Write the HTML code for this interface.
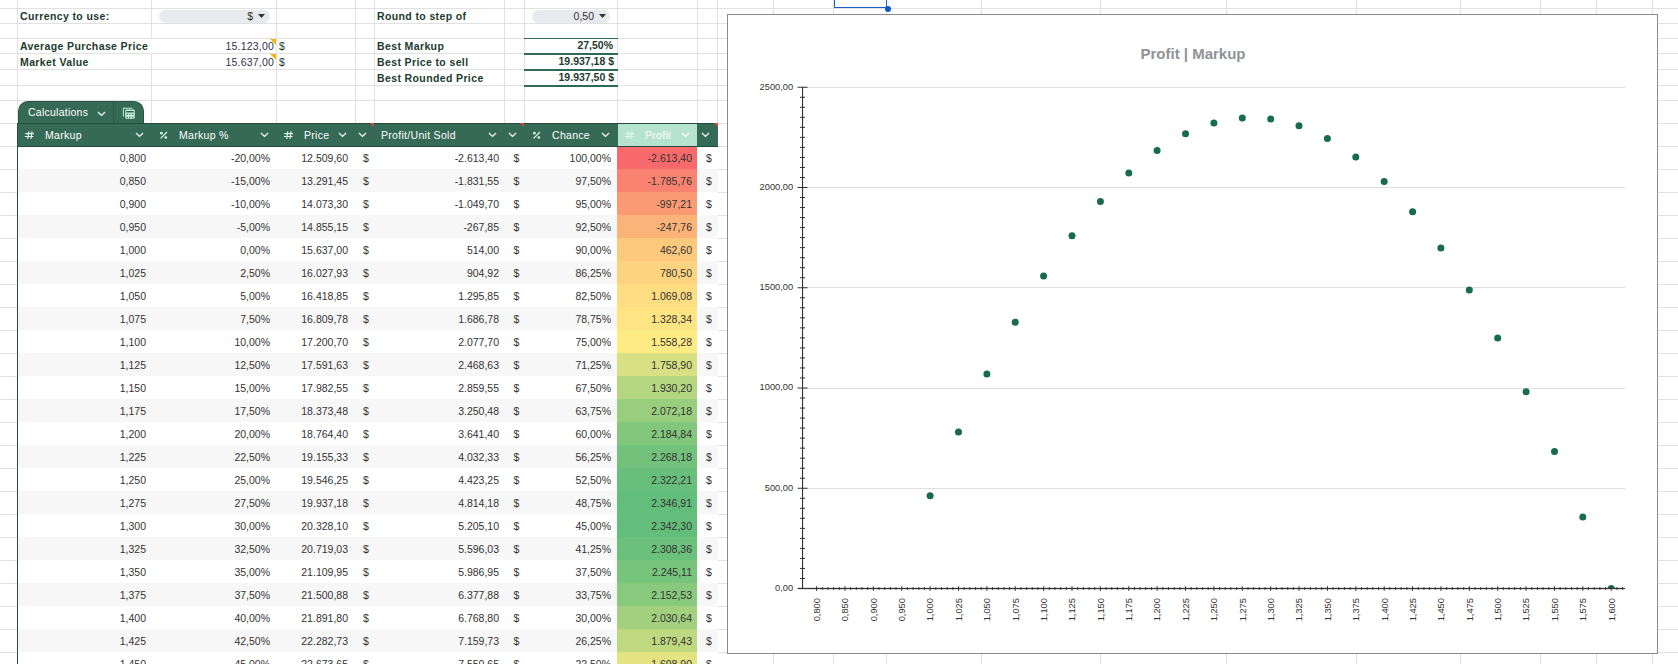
<!DOCTYPE html><html><head><meta charset="utf-8"><style>
html,body{margin:0;padding:0;}
body{width:1678px;height:664px;overflow:hidden;background:#fff;position:relative;font-family:"Liberation Sans", sans-serif;}
.a{position:absolute;white-space:nowrap;line-height:1;}
.lbl{font-weight:bold;font-size:10.5px;letter-spacing:0.38px;color:#1d3a2e;}
.val{font-weight:bold;font-size:10.5px;color:#1d3a2e;}
.num{font-size:10.5px;color:#333;}
.r{text-align:right;}
.hd{font-size:10.5px;letter-spacing:0.3px;color:#fff;}
svg{position:absolute;left:0;top:0;}

</style></head><body>
<svg width="1678" height="664" shape-rendering="crispEdges"><rect x="0" y="8" width="1678" height="1" fill="#e1e1e1"/><rect x="0" y="23" width="1678" height="1" fill="#e1e1e1"/><rect x="0" y="38" width="1678" height="1" fill="#e1e1e1"/><rect x="0" y="53" width="1678" height="1" fill="#e1e1e1"/><rect x="0" y="69" width="1678" height="1" fill="#e1e1e1"/><rect x="0" y="85" width="1678" height="1" fill="#e1e1e1"/><rect x="0" y="100" width="1678" height="1" fill="#e1e1e1"/><rect x="0" y="123" width="1678" height="1" fill="#e1e1e1"/><rect x="0" y="146" width="1678" height="1" fill="#e1e1e1"/><rect x="0" y="169" width="1678" height="1" fill="#e1e1e1"/><rect x="0" y="192" width="1678" height="1" fill="#e1e1e1"/><rect x="0" y="215" width="1678" height="1" fill="#e1e1e1"/><rect x="0" y="238" width="1678" height="1" fill="#e1e1e1"/><rect x="0" y="261" width="1678" height="1" fill="#e1e1e1"/><rect x="0" y="284" width="1678" height="1" fill="#e1e1e1"/><rect x="0" y="307" width="1678" height="1" fill="#e1e1e1"/><rect x="0" y="330" width="1678" height="1" fill="#e1e1e1"/><rect x="0" y="353" width="1678" height="1" fill="#e1e1e1"/><rect x="0" y="376" width="1678" height="1" fill="#e1e1e1"/><rect x="0" y="399" width="1678" height="1" fill="#e1e1e1"/><rect x="0" y="422" width="1678" height="1" fill="#e1e1e1"/><rect x="0" y="445" width="1678" height="1" fill="#e1e1e1"/><rect x="0" y="468" width="1678" height="1" fill="#e1e1e1"/><rect x="0" y="491" width="1678" height="1" fill="#e1e1e1"/><rect x="0" y="514" width="1678" height="1" fill="#e1e1e1"/><rect x="0" y="537" width="1678" height="1" fill="#e1e1e1"/><rect x="0" y="560" width="1678" height="1" fill="#e1e1e1"/><rect x="0" y="583" width="1678" height="1" fill="#e1e1e1"/><rect x="0" y="606" width="1678" height="1" fill="#e1e1e1"/><rect x="0" y="629" width="1678" height="1" fill="#e1e1e1"/><rect x="0" y="652" width="1678" height="1" fill="#e1e1e1"/><rect x="0" y="675" width="1678" height="1" fill="#e1e1e1"/><rect x="17" y="0" width="1" height="664" fill="#e1e1e1"/><rect x="151" y="0" width="1" height="664" fill="#e1e1e1"/><rect x="276" y="0" width="1" height="664" fill="#e1e1e1"/><rect x="355" y="0" width="1" height="664" fill="#e1e1e1"/><rect x="374" y="0" width="1" height="664" fill="#e1e1e1"/><rect x="504" y="0" width="1" height="664" fill="#e1e1e1"/><rect x="524" y="0" width="1" height="664" fill="#e1e1e1"/><rect x="617" y="0" width="1" height="664" fill="#e1e1e1"/><rect x="697" y="0" width="1" height="664" fill="#e1e1e1"/><rect x="717" y="0" width="1" height="664" fill="#e1e1e1"/><rect x="773" y="0" width="1" height="664" fill="#e1e1e1"/><rect x="833" y="0" width="1" height="664" fill="#e1e1e1"/><rect x="886" y="0" width="1" height="664" fill="#e1e1e1"/><rect x="981" y="0" width="1" height="664" fill="#e1e1e1"/><rect x="1100" y="0" width="1" height="664" fill="#e1e1e1"/><rect x="1226" y="0" width="1" height="664" fill="#e1e1e1"/><rect x="1356" y="0" width="1" height="664" fill="#e1e1e1"/><rect x="1460" y="0" width="1" height="664" fill="#e1e1e1"/><rect x="1540" y="0" width="1" height="664" fill="#e1e1e1"/><rect x="1596" y="0" width="1" height="664" fill="#e1e1e1"/><rect x="1652" y="0" width="1" height="664" fill="#e1e1e1"/></svg>
<div class="a lbl" style="left:20px;top:11px;">Currency to use:</div>
<div class="a lbl" style="left:20px;top:41px;">Average Purchase Price</div>
<div class="a lbl" style="left:20px;top:57px;">Market Value</div>
<div class="a lbl" style="left:377px;top:11px;">Round to step of</div>
<div class="a lbl" style="left:377px;top:41px;">Best Markup</div>
<div class="a lbl" style="left:377px;top:57px;">Best Price to sell</div>
<div class="a lbl" style="left:377px;top:73px;">Best Rounded Price</div>
<div class="a" style="left:159px;top:10px;width:111px;height:13px;border-radius:7px;background:#e8eaed;"></div>
<div class="a num" style="right:1425px;top:11px;color:#1f2f28;">$</div>
<svg width="8" height="5" style="left:258px;top:14px;"><path d="M0 0H7L3.5 4Z" fill="#333"/></svg>
<div class="a" style="left:532px;top:10px;width:78px;height:13px;border-radius:7px;background:#e8eaed;"></div>
<div class="a num" style="right:1084px;top:11px;">0,50</div>
<svg width="8" height="5" style="left:599px;top:14px;"><path d="M0 0H7L3.5 4Z" fill="#333"/></svg>
<div class="a" style="left:151px;top:39px;width:125px;height:14px;background:#fff"></div>
<div class="a num" style="right:1404px;top:41px;color:#33334a;letter-spacing:0.2px;">15.123,00</div>
<div class="a num" style="right:1404px;top:57px;color:#33334a;letter-spacing:0.2px;">15.637,00</div>
<div class="a num" style="left:279px;top:41px;color:#1f3a30;">$</div>
<div class="a num" style="left:279px;top:57px;color:#1f3a30;">$</div>
<svg width="7" height="6" style="left:270px;top:39px;"><path d="M0 0H6V6Z" fill="#f6b40e"/></svg>
<svg width="7" height="6" style="left:270px;top:54px;"><path d="M0 0H6V6Z" fill="#f6b40e"/></svg>
<div class="a" style="left:524px;top:38px;width:94px;height:1px;background:#2e6b57"></div>
<div class="a" style="left:524px;top:53px;width:94px;height:2px;background:#2e6b57"></div>
<div class="a" style="left:524px;top:69px;width:94px;height:2px;background:#2e6b57"></div>
<div class="a" style="left:524px;top:85px;width:94px;height:2px;background:#2e6b57"></div>
<div class="a val" style="right:1065px;top:40px;">27,50%</div>
<div class="a val" style="right:1064px;top:56px;">19.937,18 $</div>
<div class="a val" style="right:1064px;top:72px;">19.937,50 $</div>
<div class="a" style="left:18px;top:101px;width:124px;height:22px;background:#356a56;border:1px solid #2a5544;border-bottom:none;border-radius:10px 10px 0 0;"></div>
<div class="a" style="left:113px;top:101px;width:1px;height:22px;background:#2a5a48;"></div>
<div class="a hd" style="left:28px;top:107px;letter-spacing:0.25px;">Calculations</div>
<svg width="9" height="6" style="left:97px;top:111px;"><path d="M1 1L4.5 4.5L8 1" fill="none" stroke="#fff" stroke-width="1.2"/></svg>
<svg width="16" height="16" style="left:120px;top:104px;"><path d="M3.4 12.6V4.2H12.3" fill="none" stroke="#b9e6d3" stroke-width="1.1"/><rect x="5.2" y="5.6" width="9.6" height="9.2" rx="1.4" fill="#c4ecdb"/><rect x="6.3" y="7.0" width="7.4" height="1.5" fill="#2f5f4d"/><g fill="#2f5f4d"><rect x="6.6" y="9.8" width="1.3" height="1"/><rect x="9.2" y="9.8" width="1.3" height="1"/><rect x="12.1" y="9.8" width="1.3" height="1"/><rect x="6.6" y="12.8" width="1.3" height="1"/><rect x="9.2" y="12.8" width="1.3" height="1"/><rect x="12.1" y="12.8" width="1.3" height="1"/></g></svg>
<div class="a" style="left:18px;top:146px;width:700px;height:23px;background:#ffffff;"></div>
<div class="a" style="left:617px;top:146px;width:80px;height:23px;background:#f8696b;"></div>
<div class="a num" style="right:1532px;top:153px;">0,800</div>
<div class="a num" style="right:1408px;top:153px;">-20,00%</div>
<div class="a num" style="right:1330px;top:153px;">12.509,60</div>
<div class="a num" style="left:363px;top:153px;">$</div>
<div class="a num" style="right:1179px;top:153px;">-2.613,40</div>
<div class="a num" style="left:513.5px;top:153px;">$</div>
<div class="a num" style="right:1067px;top:153px;">100,00%</div>
<div class="a num" style="right:986px;top:153px;">-2.613,40</div>
<div class="a num" style="left:706px;top:153px;">$</div>
<div class="a" style="left:18px;top:169px;width:700px;height:23px;background:#f7f7f7;"></div>
<div class="a" style="left:617px;top:169px;width:80px;height:23px;background:#f98370;"></div>
<div class="a num" style="right:1532px;top:176px;">0,850</div>
<div class="a num" style="right:1408px;top:176px;">-15,00%</div>
<div class="a num" style="right:1330px;top:176px;">13.291,45</div>
<div class="a num" style="left:363px;top:176px;">$</div>
<div class="a num" style="right:1179px;top:176px;">-1.831,55</div>
<div class="a num" style="left:513.5px;top:176px;">$</div>
<div class="a num" style="right:1067px;top:176px;">97,50%</div>
<div class="a num" style="right:986px;top:176px;">-1.785,76</div>
<div class="a num" style="left:706px;top:176px;">$</div>
<div class="a" style="left:18px;top:192px;width:700px;height:23px;background:#ffffff;"></div>
<div class="a" style="left:617px;top:192px;width:80px;height:23px;background:#fb9b75;"></div>
<div class="a num" style="right:1532px;top:199px;">0,900</div>
<div class="a num" style="right:1408px;top:199px;">-10,00%</div>
<div class="a num" style="right:1330px;top:199px;">14.073,30</div>
<div class="a num" style="left:363px;top:199px;">$</div>
<div class="a num" style="right:1179px;top:199px;">-1.049,70</div>
<div class="a num" style="left:513.5px;top:199px;">$</div>
<div class="a num" style="right:1067px;top:199px;">95,00%</div>
<div class="a num" style="right:986px;top:199px;">-997,21</div>
<div class="a num" style="left:706px;top:199px;">$</div>
<div class="a" style="left:18px;top:215px;width:700px;height:23px;background:#f7f7f7;"></div>
<div class="a" style="left:617px;top:215px;width:80px;height:23px;background:#fcb379;"></div>
<div class="a num" style="right:1532px;top:222px;">0,950</div>
<div class="a num" style="right:1408px;top:222px;">-5,00%</div>
<div class="a num" style="right:1330px;top:222px;">14.855,15</div>
<div class="a num" style="left:363px;top:222px;">$</div>
<div class="a num" style="right:1179px;top:222px;">-267,85</div>
<div class="a num" style="left:513.5px;top:222px;">$</div>
<div class="a num" style="right:1067px;top:222px;">92,50%</div>
<div class="a num" style="right:986px;top:222px;">-247,76</div>
<div class="a num" style="left:706px;top:222px;">$</div>
<div class="a" style="left:18px;top:238px;width:700px;height:23px;background:#ffffff;"></div>
<div class="a" style="left:617px;top:238px;width:80px;height:23px;background:#fdc97d;"></div>
<div class="a num" style="right:1532px;top:245px;">1,000</div>
<div class="a num" style="right:1408px;top:245px;">0,00%</div>
<div class="a num" style="right:1330px;top:245px;">15.637,00</div>
<div class="a num" style="left:363px;top:245px;">$</div>
<div class="a num" style="right:1179px;top:245px;">514,00</div>
<div class="a num" style="left:513.5px;top:245px;">$</div>
<div class="a num" style="right:1067px;top:245px;">90,00%</div>
<div class="a num" style="right:986px;top:245px;">462,60</div>
<div class="a num" style="left:706px;top:245px;">$</div>
<div class="a" style="left:18px;top:261px;width:700px;height:23px;background:#f7f7f7;"></div>
<div class="a" style="left:617px;top:261px;width:80px;height:23px;background:#fed37f;"></div>
<div class="a num" style="right:1532px;top:268px;">1,025</div>
<div class="a num" style="right:1408px;top:268px;">2,50%</div>
<div class="a num" style="right:1330px;top:268px;">16.027,93</div>
<div class="a num" style="left:363px;top:268px;">$</div>
<div class="a num" style="right:1179px;top:268px;">904,92</div>
<div class="a num" style="left:513.5px;top:268px;">$</div>
<div class="a num" style="right:1067px;top:268px;">86,25%</div>
<div class="a num" style="right:986px;top:268px;">780,50</div>
<div class="a num" style="left:706px;top:268px;">$</div>
<div class="a" style="left:18px;top:284px;width:700px;height:23px;background:#ffffff;"></div>
<div class="a" style="left:617px;top:284px;width:80px;height:23px;background:#fedc81;"></div>
<div class="a num" style="right:1532px;top:291px;">1,050</div>
<div class="a num" style="right:1408px;top:291px;">5,00%</div>
<div class="a num" style="right:1330px;top:291px;">16.418,85</div>
<div class="a num" style="left:363px;top:291px;">$</div>
<div class="a num" style="right:1179px;top:291px;">1.295,85</div>
<div class="a num" style="left:513.5px;top:291px;">$</div>
<div class="a num" style="right:1067px;top:291px;">82,50%</div>
<div class="a num" style="right:986px;top:291px;">1.069,08</div>
<div class="a num" style="left:706px;top:291px;">$</div>
<div class="a" style="left:18px;top:307px;width:700px;height:23px;background:#f7f7f7;"></div>
<div class="a" style="left:617px;top:307px;width:80px;height:23px;background:#ffe483;"></div>
<div class="a num" style="right:1532px;top:314px;">1,075</div>
<div class="a num" style="right:1408px;top:314px;">7,50%</div>
<div class="a num" style="right:1330px;top:314px;">16.809,78</div>
<div class="a num" style="left:363px;top:314px;">$</div>
<div class="a num" style="right:1179px;top:314px;">1.686,78</div>
<div class="a num" style="left:513.5px;top:314px;">$</div>
<div class="a num" style="right:1067px;top:314px;">78,75%</div>
<div class="a num" style="right:986px;top:314px;">1.328,34</div>
<div class="a num" style="left:706px;top:314px;">$</div>
<div class="a" style="left:18px;top:330px;width:700px;height:23px;background:#ffffff;"></div>
<div class="a" style="left:617px;top:330px;width:80px;height:23px;background:#ffeb84;"></div>
<div class="a num" style="right:1532px;top:337px;">1,100</div>
<div class="a num" style="right:1408px;top:337px;">10,00%</div>
<div class="a num" style="right:1330px;top:337px;">17.200,70</div>
<div class="a num" style="left:363px;top:337px;">$</div>
<div class="a num" style="right:1179px;top:337px;">2.077,70</div>
<div class="a num" style="left:513.5px;top:337px;">$</div>
<div class="a num" style="right:1067px;top:337px;">75,00%</div>
<div class="a num" style="right:986px;top:337px;">1.558,28</div>
<div class="a num" style="left:706px;top:337px;">$</div>
<div class="a" style="left:18px;top:353px;width:700px;height:23px;background:#f7f7f7;"></div>
<div class="a" style="left:617px;top:353px;width:80px;height:23px;background:#d7e082;"></div>
<div class="a num" style="right:1532px;top:360px;">1,125</div>
<div class="a num" style="right:1408px;top:360px;">12,50%</div>
<div class="a num" style="right:1330px;top:360px;">17.591,63</div>
<div class="a num" style="left:363px;top:360px;">$</div>
<div class="a num" style="right:1179px;top:360px;">2.468,63</div>
<div class="a num" style="left:513.5px;top:360px;">$</div>
<div class="a num" style="right:1067px;top:360px;">71,25%</div>
<div class="a num" style="right:986px;top:360px;">1.758,90</div>
<div class="a num" style="left:706px;top:360px;">$</div>
<div class="a" style="left:18px;top:376px;width:700px;height:23px;background:#ffffff;"></div>
<div class="a" style="left:617px;top:376px;width:80px;height:23px;background:#b5d680;"></div>
<div class="a num" style="right:1532px;top:383px;">1,150</div>
<div class="a num" style="right:1408px;top:383px;">15,00%</div>
<div class="a num" style="right:1330px;top:383px;">17.982,55</div>
<div class="a num" style="left:363px;top:383px;">$</div>
<div class="a num" style="right:1179px;top:383px;">2.859,55</div>
<div class="a num" style="left:513.5px;top:383px;">$</div>
<div class="a num" style="right:1067px;top:383px;">67,50%</div>
<div class="a num" style="right:986px;top:383px;">1.930,20</div>
<div class="a num" style="left:706px;top:383px;">$</div>
<div class="a" style="left:18px;top:399px;width:700px;height:23px;background:#f7f7f7;"></div>
<div class="a" style="left:617px;top:399px;width:80px;height:23px;background:#99ce7e;"></div>
<div class="a num" style="right:1532px;top:406px;">1,175</div>
<div class="a num" style="right:1408px;top:406px;">17,50%</div>
<div class="a num" style="right:1330px;top:406px;">18.373,48</div>
<div class="a num" style="left:363px;top:406px;">$</div>
<div class="a num" style="right:1179px;top:406px;">3.250,48</div>
<div class="a num" style="left:513.5px;top:406px;">$</div>
<div class="a num" style="right:1067px;top:406px;">63,75%</div>
<div class="a num" style="right:986px;top:406px;">2.072,18</div>
<div class="a num" style="left:706px;top:406px;">$</div>
<div class="a" style="left:18px;top:422px;width:700px;height:23px;background:#ffffff;"></div>
<div class="a" style="left:617px;top:422px;width:80px;height:23px;background:#83c77d;"></div>
<div class="a num" style="right:1532px;top:429px;">1,200</div>
<div class="a num" style="right:1408px;top:429px;">20,00%</div>
<div class="a num" style="right:1330px;top:429px;">18.764,40</div>
<div class="a num" style="left:363px;top:429px;">$</div>
<div class="a num" style="right:1179px;top:429px;">3.641,40</div>
<div class="a num" style="left:513.5px;top:429px;">$</div>
<div class="a num" style="right:1067px;top:429px;">60,00%</div>
<div class="a num" style="right:986px;top:429px;">2.184,84</div>
<div class="a num" style="left:706px;top:429px;">$</div>
<div class="a" style="left:18px;top:445px;width:700px;height:23px;background:#f7f7f7;"></div>
<div class="a" style="left:617px;top:445px;width:80px;height:23px;background:#73c27c;"></div>
<div class="a num" style="right:1532px;top:452px;">1,225</div>
<div class="a num" style="right:1408px;top:452px;">22,50%</div>
<div class="a num" style="right:1330px;top:452px;">19.155,33</div>
<div class="a num" style="left:363px;top:452px;">$</div>
<div class="a num" style="right:1179px;top:452px;">4.032,33</div>
<div class="a num" style="left:513.5px;top:452px;">$</div>
<div class="a num" style="right:1067px;top:452px;">56,25%</div>
<div class="a num" style="right:986px;top:452px;">2.268,18</div>
<div class="a num" style="left:706px;top:452px;">$</div>
<div class="a" style="left:18px;top:468px;width:700px;height:23px;background:#ffffff;"></div>
<div class="a" style="left:617px;top:468px;width:80px;height:23px;background:#68bf7b;"></div>
<div class="a num" style="right:1532px;top:475px;">1,250</div>
<div class="a num" style="right:1408px;top:475px;">25,00%</div>
<div class="a num" style="right:1330px;top:475px;">19.546,25</div>
<div class="a num" style="left:363px;top:475px;">$</div>
<div class="a num" style="right:1179px;top:475px;">4.423,25</div>
<div class="a num" style="left:513.5px;top:475px;">$</div>
<div class="a num" style="right:1067px;top:475px;">52,50%</div>
<div class="a num" style="right:986px;top:475px;">2.322,21</div>
<div class="a num" style="left:706px;top:475px;">$</div>
<div class="a" style="left:18px;top:491px;width:700px;height:23px;background:#f7f7f7;"></div>
<div class="a" style="left:617px;top:491px;width:80px;height:23px;background:#63be7b;"></div>
<div class="a num" style="right:1532px;top:498px;">1,275</div>
<div class="a num" style="right:1408px;top:498px;">27,50%</div>
<div class="a num" style="right:1330px;top:498px;">19.937,18</div>
<div class="a num" style="left:363px;top:498px;">$</div>
<div class="a num" style="right:1179px;top:498px;">4.814,18</div>
<div class="a num" style="left:513.5px;top:498px;">$</div>
<div class="a num" style="right:1067px;top:498px;">48,75%</div>
<div class="a num" style="right:986px;top:498px;">2.346,91</div>
<div class="a num" style="left:706px;top:498px;">$</div>
<div class="a" style="left:18px;top:514px;width:700px;height:23px;background:#ffffff;"></div>
<div class="a" style="left:617px;top:514px;width:80px;height:23px;background:#64be7b;"></div>
<div class="a num" style="right:1532px;top:521px;">1,300</div>
<div class="a num" style="right:1408px;top:521px;">30,00%</div>
<div class="a num" style="right:1330px;top:521px;">20.328,10</div>
<div class="a num" style="left:363px;top:521px;">$</div>
<div class="a num" style="right:1179px;top:521px;">5.205,10</div>
<div class="a num" style="left:513.5px;top:521px;">$</div>
<div class="a num" style="right:1067px;top:521px;">45,00%</div>
<div class="a num" style="right:986px;top:521px;">2.342,30</div>
<div class="a num" style="left:706px;top:521px;">$</div>
<div class="a" style="left:18px;top:537px;width:700px;height:23px;background:#f7f7f7;"></div>
<div class="a" style="left:617px;top:537px;width:80px;height:23px;background:#6bc07b;"></div>
<div class="a num" style="right:1532px;top:544px;">1,325</div>
<div class="a num" style="right:1408px;top:544px;">32,50%</div>
<div class="a num" style="right:1330px;top:544px;">20.719,03</div>
<div class="a num" style="left:363px;top:544px;">$</div>
<div class="a num" style="right:1179px;top:544px;">5.596,03</div>
<div class="a num" style="left:513.5px;top:544px;">$</div>
<div class="a num" style="right:1067px;top:544px;">41,25%</div>
<div class="a num" style="right:986px;top:544px;">2.308,36</div>
<div class="a num" style="left:706px;top:544px;">$</div>
<div class="a" style="left:18px;top:560px;width:700px;height:23px;background:#ffffff;"></div>
<div class="a" style="left:617px;top:560px;width:80px;height:23px;background:#77c47c;"></div>
<div class="a num" style="right:1532px;top:567px;">1,350</div>
<div class="a num" style="right:1408px;top:567px;">35,00%</div>
<div class="a num" style="right:1330px;top:567px;">21.109,95</div>
<div class="a num" style="left:363px;top:567px;">$</div>
<div class="a num" style="right:1179px;top:567px;">5.986,95</div>
<div class="a num" style="left:513.5px;top:567px;">$</div>
<div class="a num" style="right:1067px;top:567px;">37,50%</div>
<div class="a num" style="right:986px;top:567px;">2.245,11</div>
<div class="a num" style="left:706px;top:567px;">$</div>
<div class="a" style="left:18px;top:583px;width:700px;height:23px;background:#f7f7f7;"></div>
<div class="a" style="left:617px;top:583px;width:80px;height:23px;background:#89c97d;"></div>
<div class="a num" style="right:1532px;top:590px;">1,375</div>
<div class="a num" style="right:1408px;top:590px;">37,50%</div>
<div class="a num" style="right:1330px;top:590px;">21.500,88</div>
<div class="a num" style="left:363px;top:590px;">$</div>
<div class="a num" style="right:1179px;top:590px;">6.377,88</div>
<div class="a num" style="left:513.5px;top:590px;">$</div>
<div class="a num" style="right:1067px;top:590px;">33,75%</div>
<div class="a num" style="right:986px;top:590px;">2.152,53</div>
<div class="a num" style="left:706px;top:590px;">$</div>
<div class="a" style="left:18px;top:606px;width:700px;height:23px;background:#ffffff;"></div>
<div class="a" style="left:617px;top:606px;width:80px;height:23px;background:#a2d07f;"></div>
<div class="a num" style="right:1532px;top:613px;">1,400</div>
<div class="a num" style="right:1408px;top:613px;">40,00%</div>
<div class="a num" style="right:1330px;top:613px;">21.891,80</div>
<div class="a num" style="left:363px;top:613px;">$</div>
<div class="a num" style="right:1179px;top:613px;">6.768,80</div>
<div class="a num" style="left:513.5px;top:613px;">$</div>
<div class="a num" style="right:1067px;top:613px;">30,00%</div>
<div class="a num" style="right:986px;top:613px;">2.030,64</div>
<div class="a num" style="left:706px;top:613px;">$</div>
<div class="a" style="left:18px;top:629px;width:700px;height:23px;background:#f7f7f7;"></div>
<div class="a" style="left:617px;top:629px;width:80px;height:23px;background:#bfd980;"></div>
<div class="a num" style="right:1532px;top:636px;">1,425</div>
<div class="a num" style="right:1408px;top:636px;">42,50%</div>
<div class="a num" style="right:1330px;top:636px;">22.282,73</div>
<div class="a num" style="left:363px;top:636px;">$</div>
<div class="a num" style="right:1179px;top:636px;">7.159,73</div>
<div class="a num" style="left:513.5px;top:636px;">$</div>
<div class="a num" style="right:1067px;top:636px;">26,25%</div>
<div class="a num" style="right:986px;top:636px;">1.879,43</div>
<div class="a num" style="left:706px;top:636px;">$</div>
<div class="a" style="left:18px;top:652px;width:700px;height:23px;background:#ffffff;"></div>
<div class="a" style="left:617px;top:652px;width:80px;height:23px;background:#e3e382;"></div>
<div class="a num" style="right:1532px;top:659px;">1,450</div>
<div class="a num" style="right:1408px;top:659px;">45,00%</div>
<div class="a num" style="right:1330px;top:659px;">22.673,65</div>
<div class="a num" style="left:363px;top:659px;">$</div>
<div class="a num" style="right:1179px;top:659px;">7.550,65</div>
<div class="a num" style="left:513.5px;top:659px;">$</div>
<div class="a num" style="right:1067px;top:659px;">22,50%</div>
<div class="a num" style="right:986px;top:659px;">1.698,90</div>
<div class="a num" style="left:706px;top:659px;">$</div>
<div class="a" style="left:17px;top:123px;width:701px;height:24px;background:#356a56;"></div>
<div class="a" style="left:17px;top:123px;width:701px;height:1px;background:#234d3d;"></div>
<div class="a" style="left:17px;top:146px;width:701px;height:1px;background:#234d3d;"></div>
<div class="a" style="left:618px;top:124px;width:79px;height:22px;background:#b5e3d0;"></div>
<svg width="12" height="12" style="left:24px;top:129px;"><g stroke="#dff5ec" stroke-width="1.15" fill="none"><path d="M1.3 4.6H10M0.8 7.5H9.5M4.8 2.2L3.8 10M8 2.2L7 10"/></g></svg>
<div class="a hd" style="left:45px;top:130px;">Markup</div>
<svg width="9" height="6" style="left:135px;top:132px;"><path d="M1 1L4.5 4.5L8 1" fill="none" stroke="#fff" stroke-width="1.2"/></svg>
<svg width="12" height="12" style="left:158px;top:129px;"><g fill="#d6f2e6"><circle cx="3.4" cy="4.2" r="1.35"/><circle cx="7.8" cy="8.5" r="1.35"/></g><path d="M2.6 9.4L9.0 3.0" stroke="#eafaf3" stroke-width="1.1"/></svg>
<div class="a hd" style="left:179px;top:130px;">Markup %</div>
<svg width="9" height="6" style="left:260px;top:132px;"><path d="M1 1L4.5 4.5L8 1" fill="none" stroke="#fff" stroke-width="1.2"/></svg>
<svg width="12" height="12" style="left:283px;top:129px;"><g stroke="#dff5ec" stroke-width="1.15" fill="none"><path d="M1.3 4.6H10M0.8 7.5H9.5M4.8 2.2L3.8 10M8 2.2L7 10"/></g></svg>
<div class="a hd" style="left:304px;top:130px;">Price</div>
<svg width="9" height="6" style="left:338px;top:132px;"><path d="M1 1L4.5 4.5L8 1" fill="none" stroke="#fff" stroke-width="1.2"/></svg>
<svg width="9" height="6" style="left:358px;top:132px;"><path d="M1 1L4.5 4.5L8 1" fill="none" stroke="#fff" stroke-width="1.2"/></svg>
<div class="a hd" style="left:381px;top:130px;">Profit/Unit Sold</div>
<svg width="9" height="6" style="left:488px;top:132px;"><path d="M1 1L4.5 4.5L8 1" fill="none" stroke="#fff" stroke-width="1.2"/></svg>
<svg width="9" height="6" style="left:508px;top:132px;"><path d="M1 1L4.5 4.5L8 1" fill="none" stroke="#fff" stroke-width="1.2"/></svg>
<svg width="12" height="12" style="left:531px;top:129px;"><g fill="#d6f2e6"><circle cx="3.4" cy="4.2" r="1.35"/><circle cx="7.8" cy="8.5" r="1.35"/></g><path d="M2.6 9.4L9.0 3.0" stroke="#eafaf3" stroke-width="1.1"/></svg>
<div class="a hd" style="left:552px;top:130px;">Chance</div>
<svg width="9" height="6" style="left:601px;top:132px;"><path d="M1 1L4.5 4.5L8 1" fill="none" stroke="#fff" stroke-width="1.2"/></svg>
<svg width="12" height="12" style="left:624px;top:129px;"><g stroke="#dff5ec" stroke-width="1.15" fill="none"><path d="M1.3 4.6H10M0.8 7.5H9.5M4.8 2.2L3.8 10M8 2.2L7 10"/></g></svg>
<div class="a hd" style="left:645px;top:130px;">Profit</div>
<svg width="9" height="6" style="left:681px;top:132px;"><path d="M1 1L4.5 4.5L8 1" fill="none" stroke="#fff" stroke-width="1.2"/></svg>
<svg width="9" height="6" style="left:701px;top:132px;"><path d="M1 1L4.5 4.5L8 1" fill="none" stroke="#fff" stroke-width="1.2"/></svg>
<svg width="4" height="4" style="left:370px;top:123px;"><path d="M0 0H4V4Z" fill="#e0453a"/></svg>
<svg width="4" height="4" style="left:520px;top:123px;"><path d="M0 0H4V4Z" fill="#e0453a"/></svg>
<svg width="4" height="4" style="left:714px;top:123px;"><path d="M0 0H4V4Z" fill="#e0453a"/></svg>
<div class="a" style="left:17px;top:123px;width:1px;height:541px;background:#234d3d;"></div>
<svg width="1678" height="664" style="left:0;top:0"><defs><clipPath id="pc"><rect x="790" y="60" width="850" height="528.5"/></clipPath></defs><rect x="727.5" y="14.5" width="930" height="639" fill="#fff" stroke="#8a8a8a" stroke-width="1"/><text x="1193" y="58.6" text-anchor="middle" font-family='"Liberation Sans", sans-serif' font-weight="bold" font-size="15" fill="#8e9396">Profit | Markup</text><rect x="803" y="488" width="822" height="1" fill="#dedede" shape-rendering="crispEdges"/><rect x="803" y="388" width="822" height="1" fill="#dedede" shape-rendering="crispEdges"/><rect x="803" y="287" width="822" height="1" fill="#dedede" shape-rendering="crispEdges"/><rect x="803" y="187" width="822" height="1" fill="#dedede" shape-rendering="crispEdges"/><rect x="803" y="87" width="822" height="1" fill="#dedede" shape-rendering="crispEdges"/><text x="793.2" y="590.9" text-anchor="end" font-family='"Liberation Sans", sans-serif' font-size="9.3" fill="#333">0,00</text><text x="793.2" y="490.6" text-anchor="end" font-family='"Liberation Sans", sans-serif' font-size="9.3" fill="#333">500,00</text><text x="793.2" y="390.4" text-anchor="end" font-family='"Liberation Sans", sans-serif' font-size="9.3" fill="#333">1000,00</text><text x="793.2" y="290.1" text-anchor="end" font-family='"Liberation Sans", sans-serif' font-size="9.3" fill="#333">1500,00</text><text x="793.2" y="189.9" text-anchor="end" font-family='"Liberation Sans", sans-serif' font-size="9.3" fill="#333">2000,00</text><text x="793.2" y="89.6" text-anchor="end" font-family='"Liberation Sans", sans-serif' font-size="9.3" fill="#333">2500,00</text><circle cx="930.1" cy="495.7" r="3.5" fill="#176b4f" clip-path="url(#pc)"/><circle cx="958.5" cy="432.0" r="3.5" fill="#176b4f" clip-path="url(#pc)"/><circle cx="986.9" cy="374.1" r="3.5" fill="#176b4f" clip-path="url(#pc)"/><circle cx="1015.2" cy="322.2" r="3.5" fill="#176b4f" clip-path="url(#pc)"/><circle cx="1043.6" cy="276.1" r="3.5" fill="#176b4f" clip-path="url(#pc)"/><circle cx="1072.0" cy="235.8" r="3.5" fill="#176b4f" clip-path="url(#pc)"/><circle cx="1100.4" cy="201.5" r="3.5" fill="#176b4f" clip-path="url(#pc)"/><circle cx="1128.8" cy="173.0" r="3.5" fill="#176b4f" clip-path="url(#pc)"/><circle cx="1157.1" cy="150.4" r="3.5" fill="#176b4f" clip-path="url(#pc)"/><circle cx="1185.5" cy="133.7" r="3.5" fill="#176b4f" clip-path="url(#pc)"/><circle cx="1213.9" cy="122.9" r="3.5" fill="#176b4f" clip-path="url(#pc)"/><circle cx="1242.3" cy="117.9" r="3.5" fill="#176b4f" clip-path="url(#pc)"/><circle cx="1270.7" cy="118.9" r="3.5" fill="#176b4f" clip-path="url(#pc)"/><circle cx="1299.0" cy="125.7" r="3.5" fill="#176b4f" clip-path="url(#pc)"/><circle cx="1327.4" cy="138.4" r="3.5" fill="#176b4f" clip-path="url(#pc)"/><circle cx="1355.8" cy="156.9" r="3.5" fill="#176b4f" clip-path="url(#pc)"/><circle cx="1384.2" cy="181.4" r="3.5" fill="#176b4f" clip-path="url(#pc)"/><circle cx="1412.6" cy="211.7" r="3.5" fill="#176b4f" clip-path="url(#pc)"/><circle cx="1440.9" cy="247.9" r="3.5" fill="#176b4f" clip-path="url(#pc)"/><circle cx="1469.3" cy="289.9" r="3.5" fill="#176b4f" clip-path="url(#pc)"/><circle cx="1497.7" cy="337.9" r="3.5" fill="#176b4f" clip-path="url(#pc)"/><circle cx="1526.1" cy="391.7" r="3.5" fill="#176b4f" clip-path="url(#pc)"/><circle cx="1554.5" cy="451.4" r="3.5" fill="#176b4f" clip-path="url(#pc)"/><circle cx="1582.8" cy="517.0" r="3.5" fill="#176b4f" clip-path="url(#pc)"/><circle cx="1611.2" cy="588.5" r="3.5" fill="#176b4f" clip-path="url(#pc)"/><rect x="802" y="87" width="1.1" height="501.5" fill="#333"/><rect x="797.55" y="588.00" width="10" height="1" fill="#333"/><rect x="800.05" y="577.98" width="5" height="1" fill="#333"/><rect x="800.05" y="567.95" width="5" height="1" fill="#333"/><rect x="800.05" y="557.92" width="5" height="1" fill="#333"/><rect x="800.05" y="547.90" width="5" height="1" fill="#333"/><rect x="800.05" y="537.88" width="5" height="1" fill="#333"/><rect x="800.05" y="527.85" width="5" height="1" fill="#333"/><rect x="800.05" y="517.83" width="5" height="1" fill="#333"/><rect x="800.05" y="507.80" width="5" height="1" fill="#333"/><rect x="800.05" y="497.77" width="5" height="1" fill="#333"/><rect x="797.55" y="487.75" width="10" height="1" fill="#333"/><rect x="800.05" y="477.73" width="5" height="1" fill="#333"/><rect x="800.05" y="467.70" width="5" height="1" fill="#333"/><rect x="800.05" y="457.67" width="5" height="1" fill="#333"/><rect x="800.05" y="447.65" width="5" height="1" fill="#333"/><rect x="800.05" y="437.62" width="5" height="1" fill="#333"/><rect x="800.05" y="427.60" width="5" height="1" fill="#333"/><rect x="800.05" y="417.57" width="5" height="1" fill="#333"/><rect x="800.05" y="407.55" width="5" height="1" fill="#333"/><rect x="800.05" y="397.52" width="5" height="1" fill="#333"/><rect x="797.55" y="387.50" width="10" height="1" fill="#333"/><rect x="800.05" y="377.47" width="5" height="1" fill="#333"/><rect x="800.05" y="367.45" width="5" height="1" fill="#333"/><rect x="800.05" y="357.42" width="5" height="1" fill="#333"/><rect x="800.05" y="347.40" width="5" height="1" fill="#333"/><rect x="800.05" y="337.38" width="5" height="1" fill="#333"/><rect x="800.05" y="327.35" width="5" height="1" fill="#333"/><rect x="800.05" y="317.32" width="5" height="1" fill="#333"/><rect x="800.05" y="307.30" width="5" height="1" fill="#333"/><rect x="800.05" y="297.27" width="5" height="1" fill="#333"/><rect x="797.55" y="287.25" width="10" height="1" fill="#333"/><rect x="800.05" y="277.23" width="5" height="1" fill="#333"/><rect x="800.05" y="267.20" width="5" height="1" fill="#333"/><rect x="800.05" y="257.17" width="5" height="1" fill="#333"/><rect x="800.05" y="247.15" width="5" height="1" fill="#333"/><rect x="800.05" y="237.12" width="5" height="1" fill="#333"/><rect x="800.05" y="227.10" width="5" height="1" fill="#333"/><rect x="800.05" y="217.07" width="5" height="1" fill="#333"/><rect x="800.05" y="207.05" width="5" height="1" fill="#333"/><rect x="800.05" y="197.02" width="5" height="1" fill="#333"/><rect x="797.55" y="187.00" width="10" height="1" fill="#333"/><rect x="800.05" y="176.98" width="5" height="1" fill="#333"/><rect x="800.05" y="166.95" width="5" height="1" fill="#333"/><rect x="800.05" y="156.92" width="5" height="1" fill="#333"/><rect x="800.05" y="146.90" width="5" height="1" fill="#333"/><rect x="800.05" y="136.87" width="5" height="1" fill="#333"/><rect x="800.05" y="126.85" width="5" height="1" fill="#333"/><rect x="800.05" y="116.82" width="5" height="1" fill="#333"/><rect x="800.05" y="106.80" width="5" height="1" fill="#333"/><rect x="800.05" y="96.77" width="5" height="1" fill="#333"/><rect x="797.55" y="86.75" width="10" height="1" fill="#333"/><rect x="798" y="587.85" width="827" height="1.3" fill="#333"/><rect x="816.09" y="586.20" width="1" height="4.6" fill="#333"/><rect x="821.77" y="587.10" width="1" height="2.8" fill="#333"/><rect x="827.44" y="587.10" width="1" height="2.8" fill="#333"/><rect x="833.12" y="587.10" width="1" height="2.8" fill="#333"/><rect x="838.79" y="587.10" width="1" height="2.8" fill="#333"/><text transform="translate(819.9,621.3) rotate(-90)" font-family='"Liberation Sans", sans-serif' font-size="9.3" fill="#333">0,800</text><rect x="844.47" y="586.20" width="1" height="4.6" fill="#333"/><rect x="850.14" y="587.10" width="1" height="2.8" fill="#333"/><rect x="855.82" y="587.10" width="1" height="2.8" fill="#333"/><rect x="861.50" y="587.10" width="1" height="2.8" fill="#333"/><rect x="867.17" y="587.10" width="1" height="2.8" fill="#333"/><text transform="translate(848.3,621.3) rotate(-90)" font-family='"Liberation Sans", sans-serif' font-size="9.3" fill="#333">0,850</text><rect x="872.85" y="586.20" width="1" height="4.6" fill="#333"/><rect x="878.52" y="587.10" width="1" height="2.8" fill="#333"/><rect x="884.20" y="587.10" width="1" height="2.8" fill="#333"/><rect x="889.88" y="587.10" width="1" height="2.8" fill="#333"/><rect x="895.55" y="587.10" width="1" height="2.8" fill="#333"/><text transform="translate(876.6,621.3) rotate(-90)" font-family='"Liberation Sans", sans-serif' font-size="9.3" fill="#333">0,900</text><rect x="901.23" y="586.20" width="1" height="4.6" fill="#333"/><rect x="906.90" y="587.10" width="1" height="2.8" fill="#333"/><rect x="912.58" y="587.10" width="1" height="2.8" fill="#333"/><rect x="918.26" y="587.10" width="1" height="2.8" fill="#333"/><rect x="923.93" y="587.10" width="1" height="2.8" fill="#333"/><text transform="translate(905.0,621.3) rotate(-90)" font-family='"Liberation Sans", sans-serif' font-size="9.3" fill="#333">0,950</text><rect x="929.61" y="586.20" width="1" height="4.6" fill="#333"/><rect x="935.28" y="587.10" width="1" height="2.8" fill="#333"/><rect x="940.96" y="587.10" width="1" height="2.8" fill="#333"/><rect x="946.63" y="587.10" width="1" height="2.8" fill="#333"/><rect x="952.31" y="587.10" width="1" height="2.8" fill="#333"/><text transform="translate(933.4,621.3) rotate(-90)" font-family='"Liberation Sans", sans-serif' font-size="9.3" fill="#333">1,000</text><rect x="957.99" y="586.20" width="1" height="4.6" fill="#333"/><rect x="963.66" y="587.10" width="1" height="2.8" fill="#333"/><rect x="969.34" y="587.10" width="1" height="2.8" fill="#333"/><rect x="975.01" y="587.10" width="1" height="2.8" fill="#333"/><rect x="980.69" y="587.10" width="1" height="2.8" fill="#333"/><text transform="translate(961.8,621.3) rotate(-90)" font-family='"Liberation Sans", sans-serif' font-size="9.3" fill="#333">1,025</text><rect x="986.37" y="586.20" width="1" height="4.6" fill="#333"/><rect x="992.04" y="587.10" width="1" height="2.8" fill="#333"/><rect x="997.72" y="587.10" width="1" height="2.8" fill="#333"/><rect x="1003.39" y="587.10" width="1" height="2.8" fill="#333"/><rect x="1009.07" y="587.10" width="1" height="2.8" fill="#333"/><text transform="translate(990.2,621.3) rotate(-90)" font-family='"Liberation Sans", sans-serif' font-size="9.3" fill="#333">1,050</text><rect x="1014.74" y="586.20" width="1" height="4.6" fill="#333"/><rect x="1020.42" y="587.10" width="1" height="2.8" fill="#333"/><rect x="1026.10" y="587.10" width="1" height="2.8" fill="#333"/><rect x="1031.77" y="587.10" width="1" height="2.8" fill="#333"/><rect x="1037.45" y="587.10" width="1" height="2.8" fill="#333"/><text transform="translate(1018.5,621.3) rotate(-90)" font-family='"Liberation Sans", sans-serif' font-size="9.3" fill="#333">1,075</text><rect x="1043.12" y="586.20" width="1" height="4.6" fill="#333"/><rect x="1048.80" y="587.10" width="1" height="2.8" fill="#333"/><rect x="1054.48" y="587.10" width="1" height="2.8" fill="#333"/><rect x="1060.15" y="587.10" width="1" height="2.8" fill="#333"/><rect x="1065.83" y="587.10" width="1" height="2.8" fill="#333"/><text transform="translate(1046.9,621.3) rotate(-90)" font-family='"Liberation Sans", sans-serif' font-size="9.3" fill="#333">1,100</text><rect x="1071.50" y="586.20" width="1" height="4.6" fill="#333"/><rect x="1077.18" y="587.10" width="1" height="2.8" fill="#333"/><rect x="1082.86" y="587.10" width="1" height="2.8" fill="#333"/><rect x="1088.53" y="587.10" width="1" height="2.8" fill="#333"/><rect x="1094.21" y="587.10" width="1" height="2.8" fill="#333"/><text transform="translate(1075.3,621.3) rotate(-90)" font-family='"Liberation Sans", sans-serif' font-size="9.3" fill="#333">1,125</text><rect x="1099.88" y="586.20" width="1" height="4.6" fill="#333"/><rect x="1105.56" y="587.10" width="1" height="2.8" fill="#333"/><rect x="1111.23" y="587.10" width="1" height="2.8" fill="#333"/><rect x="1116.91" y="587.10" width="1" height="2.8" fill="#333"/><rect x="1122.59" y="587.10" width="1" height="2.8" fill="#333"/><text transform="translate(1103.7,621.3) rotate(-90)" font-family='"Liberation Sans", sans-serif' font-size="9.3" fill="#333">1,150</text><rect x="1128.26" y="586.20" width="1" height="4.6" fill="#333"/><rect x="1133.94" y="587.10" width="1" height="2.8" fill="#333"/><rect x="1139.61" y="587.10" width="1" height="2.8" fill="#333"/><rect x="1145.29" y="587.10" width="1" height="2.8" fill="#333"/><rect x="1150.97" y="587.10" width="1" height="2.8" fill="#333"/><text transform="translate(1132.1,621.3) rotate(-90)" font-family='"Liberation Sans", sans-serif' font-size="9.3" fill="#333">1,175</text><rect x="1156.64" y="586.20" width="1" height="4.6" fill="#333"/><rect x="1162.32" y="587.10" width="1" height="2.8" fill="#333"/><rect x="1167.99" y="587.10" width="1" height="2.8" fill="#333"/><rect x="1173.67" y="587.10" width="1" height="2.8" fill="#333"/><rect x="1179.34" y="587.10" width="1" height="2.8" fill="#333"/><text transform="translate(1160.4,621.3) rotate(-90)" font-family='"Liberation Sans", sans-serif' font-size="9.3" fill="#333">1,200</text><rect x="1185.02" y="586.20" width="1" height="4.6" fill="#333"/><rect x="1190.70" y="587.10" width="1" height="2.8" fill="#333"/><rect x="1196.37" y="587.10" width="1" height="2.8" fill="#333"/><rect x="1202.05" y="587.10" width="1" height="2.8" fill="#333"/><rect x="1207.72" y="587.10" width="1" height="2.8" fill="#333"/><text transform="translate(1188.8,621.3) rotate(-90)" font-family='"Liberation Sans", sans-serif' font-size="9.3" fill="#333">1,225</text><rect x="1213.40" y="586.20" width="1" height="4.6" fill="#333"/><rect x="1219.08" y="587.10" width="1" height="2.8" fill="#333"/><rect x="1224.75" y="587.10" width="1" height="2.8" fill="#333"/><rect x="1230.43" y="587.10" width="1" height="2.8" fill="#333"/><rect x="1236.10" y="587.10" width="1" height="2.8" fill="#333"/><text transform="translate(1217.2,621.3) rotate(-90)" font-family='"Liberation Sans", sans-serif' font-size="9.3" fill="#333">1,250</text><rect x="1241.78" y="586.20" width="1" height="4.6" fill="#333"/><rect x="1247.46" y="587.10" width="1" height="2.8" fill="#333"/><rect x="1253.13" y="587.10" width="1" height="2.8" fill="#333"/><rect x="1258.81" y="587.10" width="1" height="2.8" fill="#333"/><rect x="1264.48" y="587.10" width="1" height="2.8" fill="#333"/><text transform="translate(1245.6,621.3) rotate(-90)" font-family='"Liberation Sans", sans-serif' font-size="9.3" fill="#333">1,275</text><rect x="1270.16" y="586.20" width="1" height="4.6" fill="#333"/><rect x="1275.83" y="587.10" width="1" height="2.8" fill="#333"/><rect x="1281.51" y="587.10" width="1" height="2.8" fill="#333"/><rect x="1287.19" y="587.10" width="1" height="2.8" fill="#333"/><rect x="1292.86" y="587.10" width="1" height="2.8" fill="#333"/><text transform="translate(1274.0,621.3) rotate(-90)" font-family='"Liberation Sans", sans-serif' font-size="9.3" fill="#333">1,300</text><rect x="1298.54" y="586.20" width="1" height="4.6" fill="#333"/><rect x="1304.21" y="587.10" width="1" height="2.8" fill="#333"/><rect x="1309.89" y="587.10" width="1" height="2.8" fill="#333"/><rect x="1315.57" y="587.10" width="1" height="2.8" fill="#333"/><rect x="1321.24" y="587.10" width="1" height="2.8" fill="#333"/><text transform="translate(1302.3,621.3) rotate(-90)" font-family='"Liberation Sans", sans-serif' font-size="9.3" fill="#333">1,325</text><rect x="1326.92" y="586.20" width="1" height="4.6" fill="#333"/><rect x="1332.59" y="587.10" width="1" height="2.8" fill="#333"/><rect x="1338.27" y="587.10" width="1" height="2.8" fill="#333"/><rect x="1343.94" y="587.10" width="1" height="2.8" fill="#333"/><rect x="1349.62" y="587.10" width="1" height="2.8" fill="#333"/><text transform="translate(1330.7,621.3) rotate(-90)" font-family='"Liberation Sans", sans-serif' font-size="9.3" fill="#333">1,350</text><rect x="1355.30" y="586.20" width="1" height="4.6" fill="#333"/><rect x="1360.97" y="587.10" width="1" height="2.8" fill="#333"/><rect x="1366.65" y="587.10" width="1" height="2.8" fill="#333"/><rect x="1372.32" y="587.10" width="1" height="2.8" fill="#333"/><rect x="1378.00" y="587.10" width="1" height="2.8" fill="#333"/><text transform="translate(1359.1,621.3) rotate(-90)" font-family='"Liberation Sans", sans-serif' font-size="9.3" fill="#333">1,375</text><rect x="1383.68" y="586.20" width="1" height="4.6" fill="#333"/><rect x="1389.35" y="587.10" width="1" height="2.8" fill="#333"/><rect x="1395.03" y="587.10" width="1" height="2.8" fill="#333"/><rect x="1400.70" y="587.10" width="1" height="2.8" fill="#333"/><rect x="1406.38" y="587.10" width="1" height="2.8" fill="#333"/><text transform="translate(1387.5,621.3) rotate(-90)" font-family='"Liberation Sans", sans-serif' font-size="9.3" fill="#333">1,400</text><rect x="1412.06" y="586.20" width="1" height="4.6" fill="#333"/><rect x="1417.73" y="587.10" width="1" height="2.8" fill="#333"/><rect x="1423.41" y="587.10" width="1" height="2.8" fill="#333"/><rect x="1429.08" y="587.10" width="1" height="2.8" fill="#333"/><rect x="1434.76" y="587.10" width="1" height="2.8" fill="#333"/><text transform="translate(1415.9,621.3) rotate(-90)" font-family='"Liberation Sans", sans-serif' font-size="9.3" fill="#333">1,425</text><rect x="1440.43" y="586.20" width="1" height="4.6" fill="#333"/><rect x="1446.11" y="587.10" width="1" height="2.8" fill="#333"/><rect x="1451.79" y="587.10" width="1" height="2.8" fill="#333"/><rect x="1457.46" y="587.10" width="1" height="2.8" fill="#333"/><rect x="1463.14" y="587.10" width="1" height="2.8" fill="#333"/><text transform="translate(1444.2,621.3) rotate(-90)" font-family='"Liberation Sans", sans-serif' font-size="9.3" fill="#333">1,450</text><rect x="1468.81" y="586.20" width="1" height="4.6" fill="#333"/><rect x="1474.49" y="587.10" width="1" height="2.8" fill="#333"/><rect x="1480.17" y="587.10" width="1" height="2.8" fill="#333"/><rect x="1485.84" y="587.10" width="1" height="2.8" fill="#333"/><rect x="1491.52" y="587.10" width="1" height="2.8" fill="#333"/><text transform="translate(1472.6,621.3) rotate(-90)" font-family='"Liberation Sans", sans-serif' font-size="9.3" fill="#333">1,475</text><rect x="1497.19" y="586.20" width="1" height="4.6" fill="#333"/><rect x="1502.87" y="587.10" width="1" height="2.8" fill="#333"/><rect x="1508.54" y="587.10" width="1" height="2.8" fill="#333"/><rect x="1514.22" y="587.10" width="1" height="2.8" fill="#333"/><rect x="1519.90" y="587.10" width="1" height="2.8" fill="#333"/><text transform="translate(1501.0,621.3) rotate(-90)" font-family='"Liberation Sans", sans-serif' font-size="9.3" fill="#333">1,500</text><rect x="1525.57" y="586.20" width="1" height="4.6" fill="#333"/><rect x="1531.25" y="587.10" width="1" height="2.8" fill="#333"/><rect x="1536.92" y="587.10" width="1" height="2.8" fill="#333"/><rect x="1542.60" y="587.10" width="1" height="2.8" fill="#333"/><rect x="1548.28" y="587.10" width="1" height="2.8" fill="#333"/><text transform="translate(1529.4,621.3) rotate(-90)" font-family='"Liberation Sans", sans-serif' font-size="9.3" fill="#333">1,525</text><rect x="1553.95" y="586.20" width="1" height="4.6" fill="#333"/><rect x="1559.63" y="587.10" width="1" height="2.8" fill="#333"/><rect x="1565.30" y="587.10" width="1" height="2.8" fill="#333"/><rect x="1570.98" y="587.10" width="1" height="2.8" fill="#333"/><rect x="1576.66" y="587.10" width="1" height="2.8" fill="#333"/><text transform="translate(1557.8,621.3) rotate(-90)" font-family='"Liberation Sans", sans-serif' font-size="9.3" fill="#333">1,550</text><rect x="1582.33" y="586.20" width="1" height="4.6" fill="#333"/><rect x="1588.01" y="587.10" width="1" height="2.8" fill="#333"/><rect x="1593.68" y="587.10" width="1" height="2.8" fill="#333"/><rect x="1599.36" y="587.10" width="1" height="2.8" fill="#333"/><rect x="1605.03" y="587.10" width="1" height="2.8" fill="#333"/><text transform="translate(1586.1,621.3) rotate(-90)" font-family='"Liberation Sans", sans-serif' font-size="9.3" fill="#333">1,575</text><rect x="1610.71" y="586.20" width="1" height="4.6" fill="#333"/><rect x="1616.39" y="587.10" width="1" height="2.8" fill="#333"/><rect x="1622.06" y="587.10" width="1" height="2.8" fill="#333"/><text transform="translate(1614.5,621.3) rotate(-90)" font-family='"Liberation Sans", sans-serif' font-size="9.3" fill="#333">1,600</text></svg>
<div class="a" style="left:834px;top:-2px;width:51px;height:9px;border:1px solid #1a5fd0;border-top:none;"></div>
<div class="a" style="left:885px;top:6px;width:6px;height:6px;border-radius:50%;background:#0b57d0;"></div>
</body></html>
